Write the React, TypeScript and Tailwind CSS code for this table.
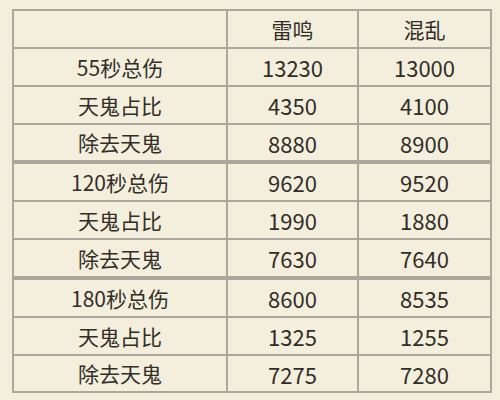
import React from "react";

type Row = { label: string; a: string; b: string; h: string; thick?: boolean };

// 三组伤害数据：每组总伤 / 天鬼占比 / 除去天鬼
const rows: Row[] = [
  { label: "55秒总伤", a: "13230", b: "13000", h: "h-[38px]" },
  { label: "天鬼占比", a: "4350", b: "4100", h: "h-[38px]" },
  { label: "除去天鬼", a: "8880", b: "8900", h: "h-[38px]" },
  { label: "120秒总伤", a: "9620", b: "9520", h: "h-[39px]", thick: true },
  { label: "天鬼占比", a: "1990", b: "1880", h: "h-[38px]" },
  { label: "除去天鬼", a: "7630", b: "7640", h: "h-[39px]" },
  { label: "180秒总伤", a: "8600", b: "8535", h: "h-[39px]", thick: true },
  { label: "天鬼占比", a: "1325", b: "1255", h: "h-[38px]" },
  { label: "除去天鬼", a: "7275", b: "7280", h: "h-[37px]" },
];

export default function App() {
  const cell = "border-2 border-[#aba79c] text-center align-middle p-0";

  return (
    <div
      className="w-[500px] h-[400px] bg-[#f4efdc] pt-[9px] pl-[12px] text-[21px] leading-none text-[#312e29]"
      style={{ fontFamily: '"Noto Sans CJK SC", "Noto Sans", sans-serif' }}
    >
      <table className="table-fixed border-collapse w-[478px]">
        <colgroup>
          <col className="w-[214px]" />
          <col className="w-[131px]" />
          <col className="w-[133px]" />
        </colgroup>
        <thead>
          <tr className="h-[38px]">
            <th className={`${cell} font-normal`}></th>
            <th className={`${cell} font-normal`}>雷鸣</th>
            <th className={`${cell} font-normal`}>混乱</th>
          </tr>
        </thead>
        <tbody>
          {rows.map((r, i) => (
            <tr key={i} className={`${r.h} ${r.thick ? "border-t-4 border-t-[#aba79c]" : ""}`}>
              <td className={`${cell} ${r.thick ? "border-t-4" : ""}`}>{r.label}</td>
              <td className={`${cell} text-[22px] ${r.thick ? "border-t-4" : ""}`}>{r.a}</td>
              <td className={`${cell} text-[22px] ${r.thick ? "border-t-4" : ""}`}>{r.b}</td>
            </tr>
          ))}
        </tbody>
      </table>
    </div>
  );
}
